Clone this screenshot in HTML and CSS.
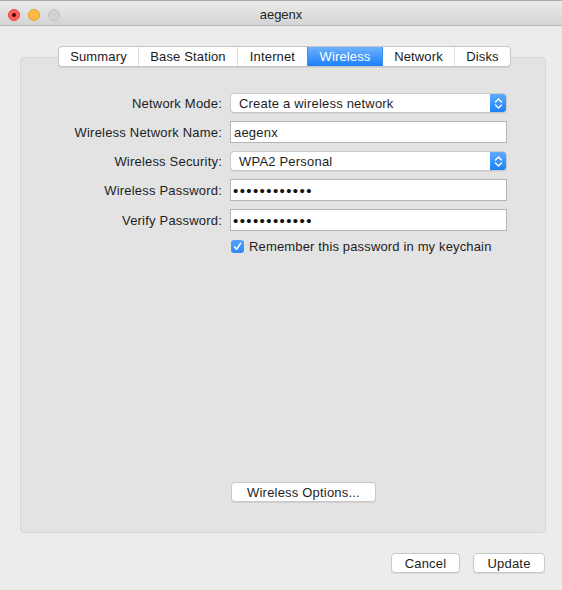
FILE: index.html
```html
<!DOCTYPE html>
<html>
<head>
<meta charset="utf-8">
<link rel="stylesheet" href="styles.css">
</head>
<body>
<div class="window">
  <div class="titlebar">
    <div class="lights">
      <span class="light red"><span class="dot"></span></span>
      <span class="light yellow"></span>
      <span class="light gray"></span>
    </div>
    <div class="title">aegenx</div>
  </div>
  <div class="content">
    <div class="tabs">
      <div class="tab w-summary">Summary</div>
      <div class="tab w-base">Base Station</div>
      <div class="tab w-internet">Internet</div>
      <div class="tab w-wireless active">Wireless</div>
      <div class="tab w-network">Network</div>
      <div class="tab w-disks">Disks</div>
    </div>
    <div class="panel">
      <div class="form">
        <div class="label">Network Mode:</div>
        <div class="popup"><span class="popup-text">Create a wireless network</span><span class="stepper"><svg width="9" height="13" viewBox="0 0 9 13"><path d="M1.5 5 L4.5 2 L7.5 5 M1.5 8 L4.5 11 L7.5 8" fill="none" stroke="#fff" stroke-width="1.4" stroke-linecap="round" stroke-linejoin="round"/></svg></span></div>

        <div class="label">Wireless Network Name:</div>
        <div class="field">aegenx</div>

        <div class="label">Wireless Security:</div>
        <div class="popup"><span class="popup-text">WPA2 Personal</span><span class="stepper"><svg width="9" height="13" viewBox="0 0 9 13"><path d="M1.5 5 L4.5 2 L7.5 5 M1.5 8 L4.5 11 L7.5 8" fill="none" stroke="#fff" stroke-width="1.4" stroke-linecap="round" stroke-linejoin="round"/></svg></span></div>

        <div class="label">Wireless Password:</div>
        <div class="field dots">••••••••••••</div>

        <div class="label">Verify Password:</div>
        <div class="field dots">••••••••••••</div>

        <div class="label"></div>
        <div class="check-row">
          <span class="checkbox"><svg width="11" height="11" viewBox="0 0 11 11"><path d="M2.5 5.8 L4.6 8.2 L8.6 2.4" fill="none" stroke="#fff" stroke-width="1.5" stroke-linecap="round" stroke-linejoin="round"/></svg></span>
          <span class="check-text">Remember this password in my keychain</span>
        </div>
      </div>
      <div class="options-row">
        <div class="button options">Wireless Options...</div>
      </div>
    </div>
    <div class="footer">
      <div class="button cancel">Cancel</div>
      <div class="button update">Update</div>
    </div>
  </div>
</div>
</body>
</html>
```

FILE: styles.css
```css
html, body {
  margin: 0;
  padding: 0;
}
body {
  background: #ececec;
  font-family: "Liberation Sans", Arial, sans-serif;
  font-size: 13px;
  color: #1e1e1e;
}
.window {
  width: 562px;
  height: 590px;
  background: #ececec;
  overflow: hidden;
}
.titlebar {
  box-sizing: border-box;
  height: 26px;
  padding-top: 3px;
  border-top: 1px solid #a9a9a9;
  border-bottom: 1px solid #b8b8b8;
  background: linear-gradient(#ebebeb, #d4d4d4);
  display: flex;
  align-items: center;
}
.lights {
  display: flex;
  gap: 8px;
  padding-left: 8px;
}
.light {
  width: 12px;
  height: 12px;
  border-radius: 50%;
  box-sizing: border-box;
  display: flex;
  align-items: center;
  justify-content: center;
}
.red {
  background: #fc605c;
  border: 1px solid #df4744;
}
.red .dot {
  width: 4px;
  height: 4px;
  border-radius: 50%;
  background: #4d0000;
}
.yellow {
  background: #fdbc40;
  border: 1px solid #dea236;
}
.gray {
  background: #d2d2d2;
  border: 1px solid #c2c2c2;
}
.title {
  flex: 1;
  text-align: center;
  margin-right: 60px;
  color: #262626;
  font-size: 13px;
}
.content {
  padding: 20px 16px 0 20px;
  display: flex;
  flex-direction: column;
}
.tabs {
  align-self: center;
  display: flex;
  margin-left: 3px;
  height: 21px;
  box-sizing: border-box;
  background: #fff;
  border: 1px solid #c6c6c6;
  border-radius: 4px;
  box-shadow: 0 1px 0 rgba(0,0,0,0.08);
  position: relative;
  z-index: 2;
  margin-bottom: -10px;
  overflow: hidden;
}
.tab {
  display: flex;
  align-items: center;
  justify-content: center;
  border-left: 1px solid #dcdcdc;
  box-sizing: border-box;
  font-size: 13px;
  color: #1a1a1a;
  letter-spacing: 0.15px;
}
.tab:first-child { border-left: none; }
.w-summary { width: 79px; }
.w-base { width: 99px; }
.w-internet { width: 70px; }
.w-wireless { width: 75px; }
.w-network { width: 72px; }
.w-disks { width: 56px; }
.tab.active {
  background: linear-gradient(#6db3fb, #1b7ff8);
  color: #fff;
  border-left-color: #3f8ff3;
}
.tab.active + .tab { border-left-color: #3f8ff3; }
.panel {
  height: 476px;
  box-sizing: border-box;
  background: #e3e3e3;
  border: 1px solid #d7d7d7;
  border-radius: 4px;
  display: flex;
  flex-direction: column;
  padding-top: 35px;
}
.form {
  display: grid;
  grid-template-columns: 201px 277px;
  column-gap: 8px;
  row-gap: 8px;
  align-items: center;
}
.label {
  text-align: right;
  letter-spacing: 0.2px;
  color: #1e1e1e;
}
.popup {
  height: 20px;
  box-sizing: border-box;
  background: #fff;
  border: 1px solid #cacaca;
  border-radius: 4px;
  box-shadow: 0 1px 0 rgba(0,0,0,0.06);
  display: flex;
  align-items: center;
  overflow: hidden;
}
.popup-text {
  flex: 1;
  padding-left: 8px;
  letter-spacing: 0.2px;
}
.stepper {
  width: 17px;
  height: 20px;
  margin-right: -1px;
  background: linear-gradient(#62adfc, #1a7ff7);
  display: flex;
  align-items: center;
  justify-content: center;
  border-radius: 0 4px 4px 0;
}
.field {
  height: 22px;
  box-sizing: border-box;
  background: #fff;
  border: 1px solid #b5b5b5;
  display: flex;
  align-items: center;
  padding-left: 3px;
  letter-spacing: 0.2px;
}
.field.dots {
  font-size: 15px;
  letter-spacing: 1.4px;
  padding-left: 2px;
  color: #111;
}
.check-row {
  display: flex;
  align-items: center;
  gap: 5px;
  height: 15px;
  margin-left: 1px;
}
.checkbox {
  width: 13px;
  height: 13px;
  border-radius: 3px;
  background: linear-gradient(#54a3fc, #2d88f6);
  display: flex;
  align-items: center;
  justify-content: center;
}
.check-text {
  letter-spacing: 0.15px;
}
.options-row {
  margin-top: auto;
  padding: 0 0 30px 210px;
  display: flex;
}
.button {
  height: 20px;
  box-sizing: border-box;
  background: #fff;
  border: 1px solid #c8c8c8;
  border-radius: 4px;
  box-shadow: 0 1px 0 rgba(0,0,0,0.08);
  display: flex;
  align-items: center;
  justify-content: center;
  letter-spacing: 0.2px;
  color: #1e1e1e;
}
.options { width: 145px; }
.footer {
  display: flex;
  justify-content: flex-end;
  gap: 13px;
  margin-top: 20px;
  margin-right: 1px;
}
.cancel { width: 69px; }
.update { width: 72px; }
```
